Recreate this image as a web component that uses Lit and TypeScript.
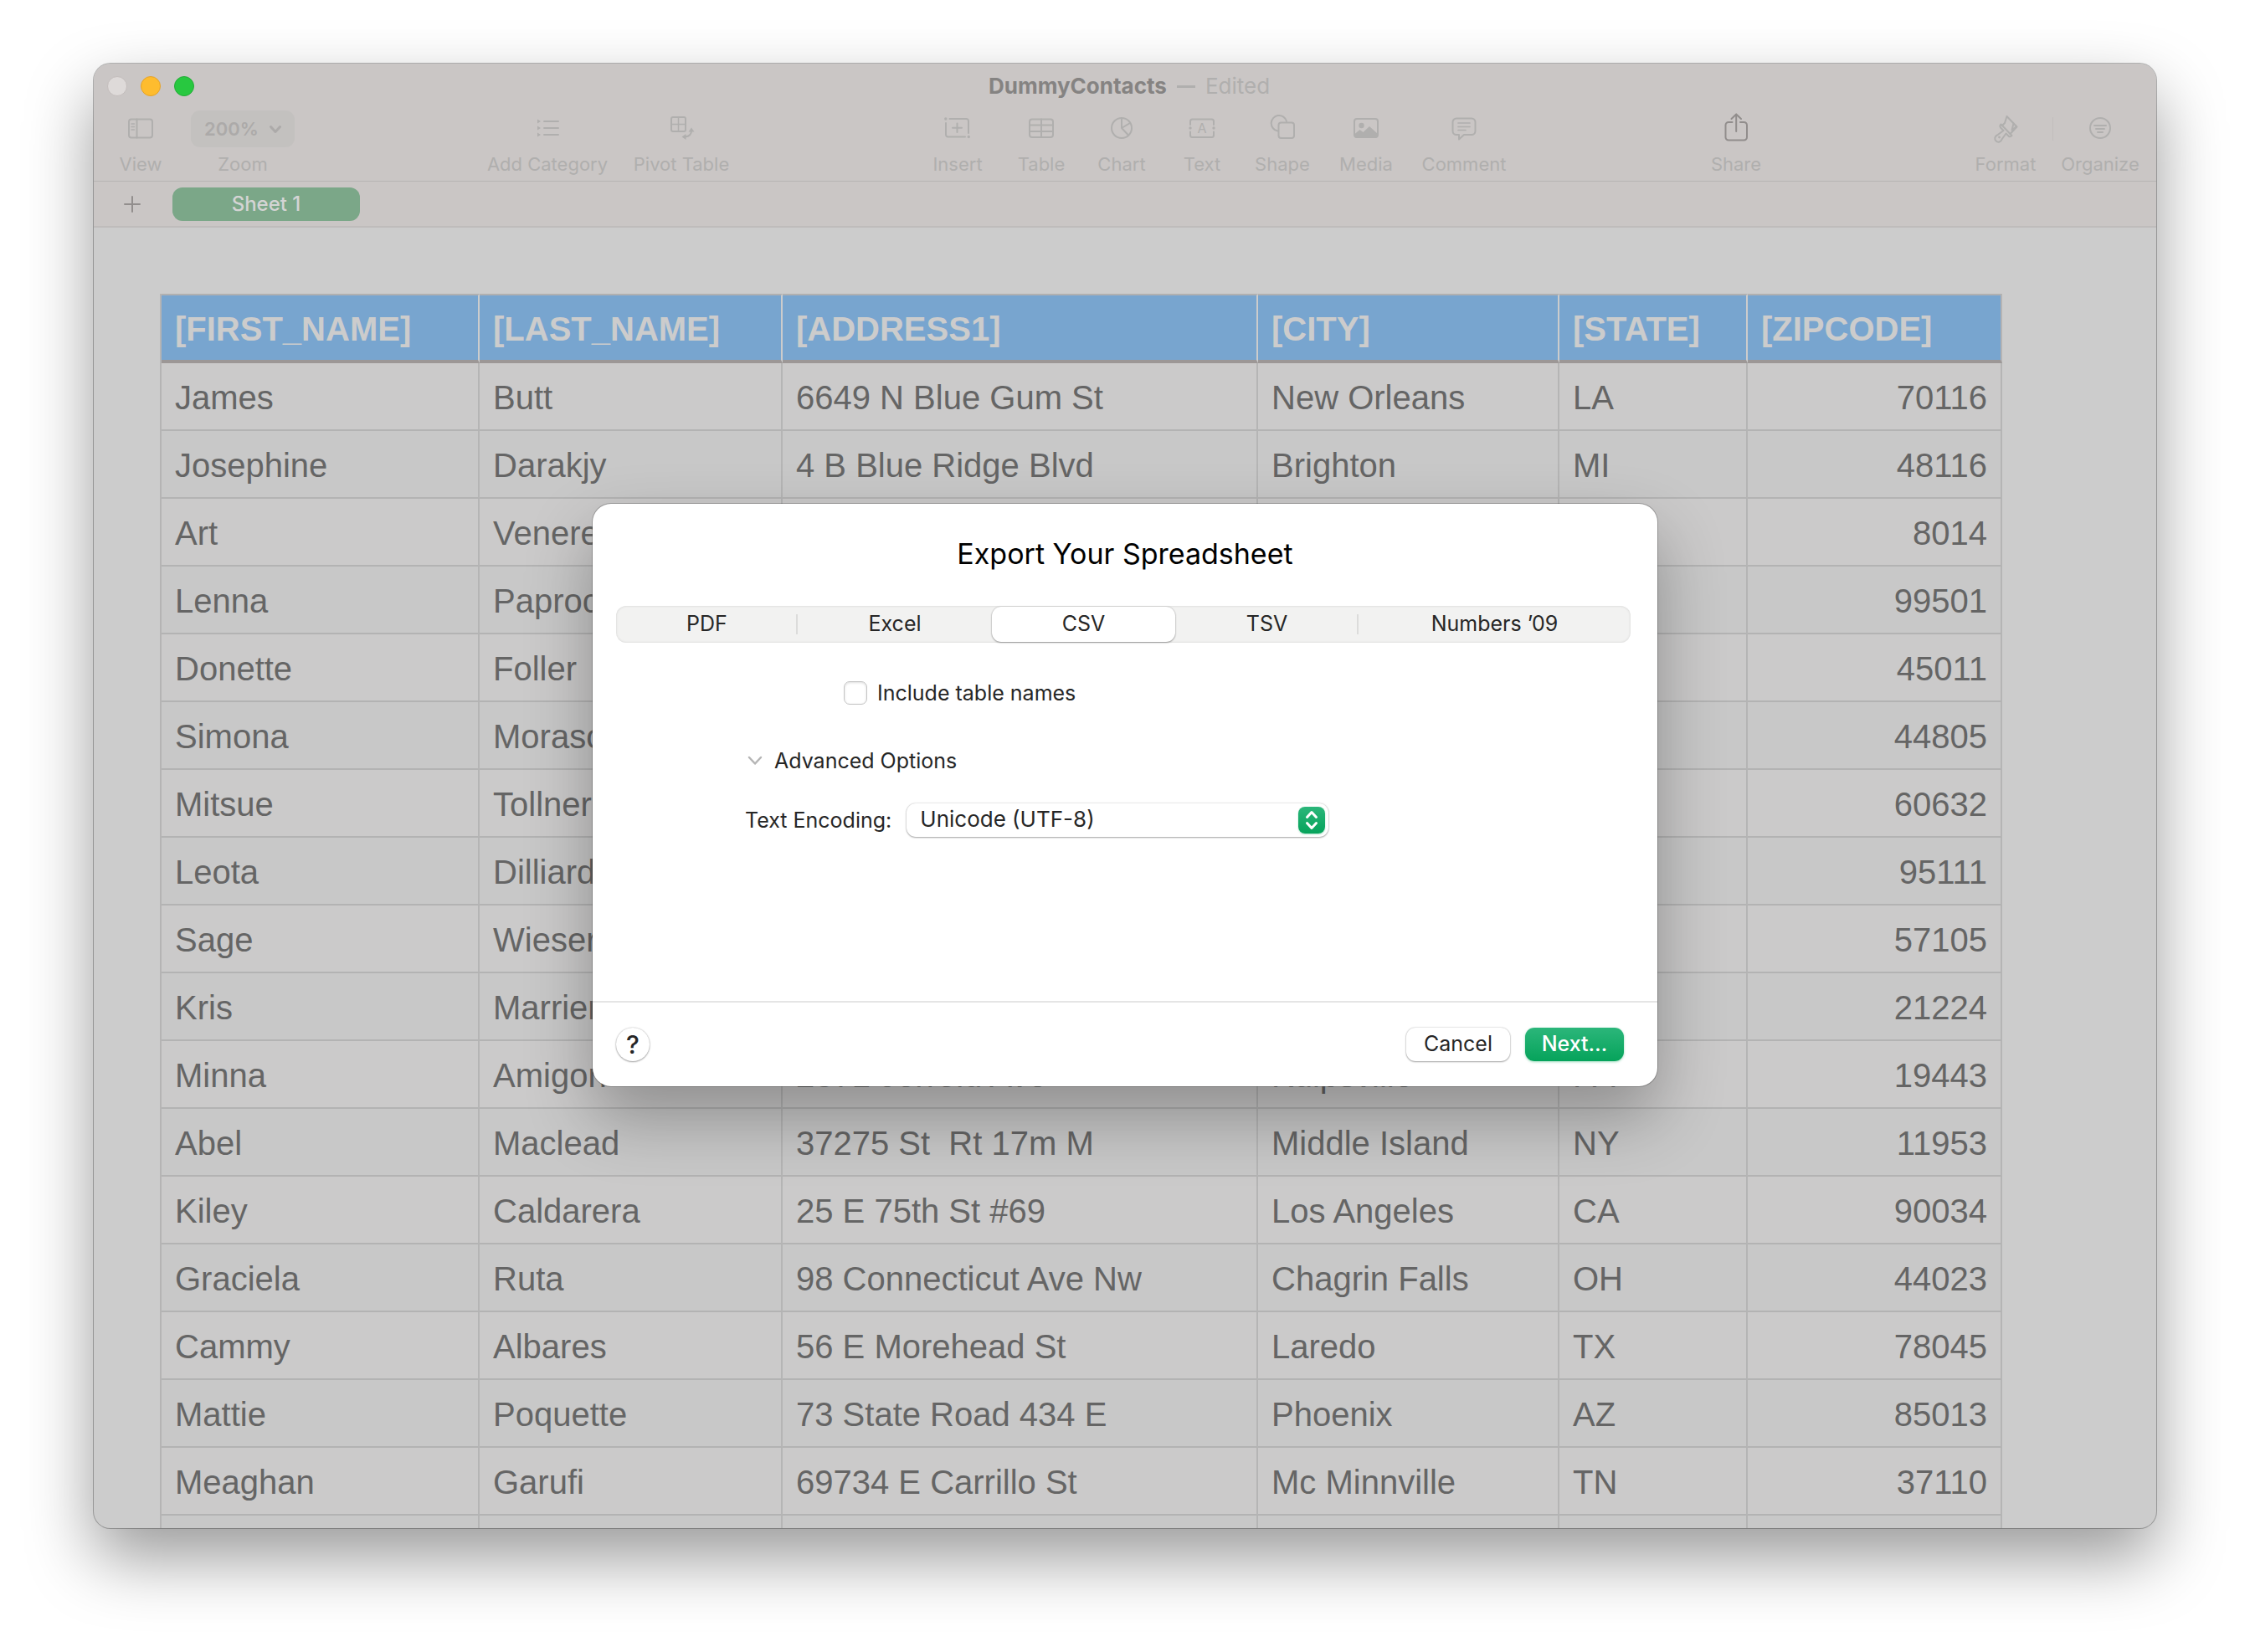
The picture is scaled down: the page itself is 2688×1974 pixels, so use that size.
import { LitElement, html, svg, css, TemplateResult, SVGTemplateResult } from "lit";
import { customElement, property, state } from "lit/decorators.js";
import { classMap } from "lit/directives/class-map.js";

const icons: Record<string, SVGTemplateResult> = {
  view: svg`
    <rect x="4" y="7.500" width="28" height="22" rx="3"/>
    <path d="M13.500 7.500V29.500"/>
    <path d="M7 13h3.500M7 16.500h3.500M7 20h3.500" stroke-width="1.500"/>`,
  category: svg`
    <path d="M14 10H31M14 18H31M14 26H31"/>
    <path d="M6 7.500L10 10L6 12.500ZM6 15.500L10 18L6 20.500ZM6 23.500L10 26L6 28.500Z" fill="currentColor" stroke="none"/>`,
  pivot: svg`
    <rect x="6" y="5" width="17" height="17" rx="2"/>
    <path d="M14.500 5V22M6 13.500H23" stroke-width="1.500"/>
    <path d="M30 21C30 25.500 28 28 22.500 28.500"/>
    <path d="M30 17.500L33.500 22.500H26.500ZM18.500 28.500L23.500 25V32Z" fill="currentColor" stroke="none"/>`,
  insert: svg`
    <path d="M8.500 7H28.500a2.500 2.500 0 0 1 2.500 2.500V24"/>
    <path d="M4 12V26a2.500 2.500 0 0 0 2.500 2.500H27"/>
    <path d="M17.500 12.500V23M12 17.700H23"/>
    <circle cx="3.800" cy="7" r="1.700" fill="currentColor" stroke="none"/>
    <circle cx="31.300" cy="28.500" r="1.700" fill="currentColor" stroke="none"/>`,
  table: svg`
    <rect x="4" y="7.500" width="28" height="21.500" rx="3"/>
    <path d="M18 7.500V29M4 14.500H32M4 22H32"/>`,
  chart: svg`
    <circle cx="18" cy="18" r="12"/>
    <path d="M18 6V18L28 12M18 18L26 26.500"/>`,
  text: svg`
    <path d="M4 14V10a2.500 2.500 0 0 1 2.500-2.500H29.500a2.500 2.500 0 0 1 2.500 2.500V14"/>
    <path d="M4 22.500V26.500a2.500 2.500 0 0 0 2.500 2.500H29.500a2.500 2.500 0 0 0 2.500-2.500V22.500"/>
    <circle cx="4" cy="18" r="1.700" fill="currentColor" stroke="none"/>
    <circle cx="32" cy="18" r="1.700" fill="currentColor" stroke="none"/>
    <text x="18" y="24" font-size="16" text-anchor="middle" fill="currentColor" stroke="none">A</text>`,
  shape: svg`
    <path d="M12.500 21.500A9.300 9.300 0 1 1 23 10"/>
    <rect x="13.500" y="11.500" width="18.500" height="18.500" rx="3"/>`,
  media: svg`
    <rect x="4" y="7" width="28" height="22" rx="3"/>
    <circle cx="12.500" cy="15" r="3.200" fill="currentColor" stroke="none"/>
    <path d="M4 25.500L10.500 20L14.500 23L22 16L32 25V27a2.500 2.500 0 0 1-2.500 2.500H6.500A2.500 2.500 0 0 1 4 27Z" fill="currentColor" stroke="none"/>`,
  comment: svg`
    <path d="M9 6.500H27a4.500 4.500 0 0 1 4.500 4.500V21.500a4.500 4.500 0 0 1-4.500 4.500H18L12 31.500V26H9a4.500 4.500 0 0 1-4.500-4.500V11A4.500 4.500 0 0 1 9 6.500Z"/>
    <path d="M11 12H25M11 16.500H25M11 20.500H20" stroke-width="1.700"/>`,
  share: svg`
    <path d="M13.500 11H9a3.500 3.500 0 0 0-3.500 3.500V29a3.500 3.500 0 0 0 3.500 3.500H27.500a3.500 3.500 0 0 0 3.500-3.500V14.500a3.500 3.500 0 0 0-3.500-3.500H23"/>
    <path d="M18.200 22V1.500M12.500 7L18.200 1.500L24 7"/>`,
  format: svg`
    <path d="M19.500 4L31.500 16.500L23.500 25L14 15L17 12Z"/>
    <path d="M14 15L12.500 13.500Q10.500 15.500 12 17.500L15.500 21L8 26.500A4.200 4.200 0 1 0 13.500 31.500L18.500 24.500L22 28Q24 29 25.500 27L23.500 25"/>
    <path d="M31 16L25.500 20.500L27.500 12.500"/>
    <circle cx="10.500" cy="29" r="1.400" fill="currentColor" stroke="none"/>`,
  organize: svg`
    <circle cx="18" cy="18" r="12"/>
    <path d="M11 15H25M13 19H23M15 23H21"/>`,
};

@customElement("tool-item")
class ToolItem extends LitElement {
  @property() label = "";
  @property() icon = "";
  @property({ type: Boolean }) strong = false;

  static styles = css`
    :host { display: block; }
    .tool {
      width: 100%; padding: 0; border: 0; background: none;
      display: flex; flex-direction: column; align-items: center; gap: 6px;
      font: 400 22px/28px Inter, "Liberation Sans", sans-serif;
      color: #b0afae; white-space: nowrap;
    }
    .box { height: 42px; display: flex; align-items: center; padding-bottom: 2px; }
    .icon {
      width: 36px; height: 36px; display: block; overflow: visible;
      fill: none; stroke: currentColor; stroke-width: 2;
      stroke-linecap: round; stroke-linejoin: round;
    }
    .dark { color: #918d8c; }
  `;

  render() {
    return html`<button class="tool">
      <span class=${classMap({ box: true, dark: this.strong })}>
        <svg class="icon" viewBox="0 0 36 36" aria-hidden="true">${icons[this.icon]}</svg>
      </span>
      <span>${this.label}</span>
    </button>`;
  }
}

const headers = ["[FIRST_NAME]", "[LAST_NAME]", "[ADDRESS1]", "[CITY]", "[STATE]", "[ZIPCODE]"];

const rows: string[][] = [
  ["James", "Butt", "6649 N Blue Gum St", "New Orleans", "LA", "70116"],
  ["Josephine", "Darakjy", "4 B Blue Ridge Blvd", "Brighton", "MI", "48116"],
  ["Art", "Venere", "", "", "", "8014"],
  ["Lenna", "Paprocki", "", "", "", "99501"],
  ["Donette", "Foller", "", "", "", "45011"],
  ["Simona", "Morasca", "", "", "", "44805"],
  ["Mitsue", "Tollner", "", "", "", "60632"],
  ["Leota", "Dilliard", "", "", "", "95111"],
  ["Sage", "Wieser", "", "", "", "57105"],
  ["Kris", "Marrier", "", "", "", "21224"],
  ["Minna", "Amigon", "2371 Jerrold Ave", "Kulpsville", "PA", "19443"],
  ["Abel", "Maclead", "37275 St  Rt 17m M", "Middle Island", "NY", "11953"],
  ["Kiley", "Caldarera", "25 E 75th St #69", "Los Angeles", "CA", "90034"],
  ["Graciela", "Ruta", "98 Connecticut Ave Nw", "Chagrin Falls", "OH", "44023"],
  ["Cammy", "Albares", "56 E Morehead St", "Laredo", "TX", "78045"],
  ["Mattie", "Poquette", "73 State Road 434 E", "Phoenix", "AZ", "85013"],
  ["Meaghan", "Garufi", "69734 E Carrillo St", "Mc Minnville", "TN", "37110"],
  ["", "", "", "", "", ""],
];

@customElement("contact-sheet")
class ContactSheet extends LitElement {
  static styles = css`
    :host { display: block; }
    .grid {
      table-layout: fixed; width: 2201px; border-collapse: separate; border-spacing: 0;
      border-left: 2px solid #b5b4b4;
      font: 400 40px/46px "Liberation Sans", Arial, sans-serif; color: #656565;
    }
    .first { width: 380px; }
    .last { width: 362px; }
    .address { width: 568px; }
    .city { width: 360px; }
    .state { width: 225px; }
    .zip { width: 304px; }
    th, td {
      box-sizing: border-box; padding: 3px 16px 0; text-align: left;
      white-space: pre; overflow: hidden;
    }
    th {
      height: 83px; background: #78a5cf; color: #cccccc; font-weight: 700;
      border-top: 2px solid #b0b0b0; border-bottom: 4px solid #9c9796;
      border-right: 2px solid #cccccc;
    }
    th:last-child { border-right-color: #b5b4b4; }
    td {
      height: 81px; background: #cbcaca;
      border-right: 2px solid #b5b5b5; border-bottom: 2px solid #b3b3b3;
    }
    tr:nth-child(even) td { background: #c8c8c8; }
    td:last-child { text-align: right; }
  `;

  render() {
    return html`<table class="grid">
      <colgroup>
        <col class="first" /><col class="last" /><col class="address" />
        <col class="city" /><col class="state" /><col class="zip" />
      </colgroup>
      <thead><tr>${headers.map((h) => html`<th scope="col">${h}</th>`)}</tr></thead>
      <tbody>${rows.map((r) => html`<tr>${r.map((c) => html`<td>${c}</td>`)}</tr>`)}</tbody>
    </table>`;
  }
}

@customElement("export-dialog")
class ExportDialog extends LitElement {
  @state() private format = "CSV";
  private formats = ["PDF", "Excel", "CSV", "TSV", "Numbers ’09"];

  static styles = css`
    :host {
      display: block; width: 1272px; max-width: 100%; box-sizing: border-box;
      border-radius: 22px; background: #ffffff; color: #262626;
      box-shadow: 0 0 0 1px rgba(0, 0, 0, 0.22), 0 36px 80px rgba(0, 0, 0, 0.3);
      font: 400 25px/28px Inter, "Liberation Sans", sans-serif;
    }
    button, select { font: inherit; color: inherit; }
    .title {
      margin: 0; padding: 40px 0 42px; text-align: center;
      font-size: 34px; line-height: 40px; font-weight: 400; color: #000000;
    }
    .segments {
      margin: 0 32px 0 28px; height: 44px; display: grid;
      grid-template-columns: 217fr 232fr 219fr 219fr 325fr;
      border-radius: 12px; background: #f2f2f1;
      box-shadow: inset 0 0 3px rgba(0, 0, 0, 0.15);
    }
    .segment {
      position: relative; border: 0; background: none; padding: 0 0 2px;
      border-radius: 11px;
    }
    .divided::after {
      content: ""; position: absolute; right: 0; top: 10px; bottom: 10px;
      width: 2px; background: #dcdcdb;
    }
    .chosen {
      margin: 1px 0; padding: 0 0 2px; background: #ffffff;
      box-shadow: 0 0 2px rgba(0, 0, 0, 0.25), 0 1px 2px rgba(0, 0, 0, 0.3);
    }
    .body { padding: 46px 0 196px; display: flex; flex-direction: column; }
    .include { display: flex; align-items: center; gap: 12px; padding-left: 300px; }
    .check {
      appearance: none; margin: 0; width: 28px; height: 28px; box-sizing: border-box;
      border: 1px solid #c4c4c4; border-radius: 7px; background: #ffffff;
      box-shadow: inset 0 1px 3px rgba(0, 0, 0, 0.14);
    }
    .advanced {
      display: flex; align-items: center; gap: 14px; align-self: flex-start;
      margin: 53px 0 37px 185px; padding: 0; border: 0; background: none;
    }
    .chevron { width: 18px; height: 12px; fill: none; stroke: #b5b5b5; stroke-width: 2.5; stroke-linecap: round; stroke-linejoin: round; }
    .encoding { display: flex; align-items: center; gap: 18px; padding-left: 182px; }
    .picker { position: relative; display: block; }
    .select {
      appearance: none; display: block; width: 504px; height: 40px; border: 0; margin: 0;
      padding: 0 40px 2px 16px; border-radius: 11px; background: #ffffff;
      font-size: 26px;
      box-shadow: 0 0 2px rgba(0, 0, 0, 0.25), 0 1px 2px rgba(0, 0, 0, 0.3);
    }
    .stepper {
      position: absolute; right: 4px; top: 4px; width: 32px; height: 32px;
      border-radius: 8px; background: linear-gradient(#2bb67a, #06a35b);
      box-shadow: 0 1px 2px rgba(6, 163, 91, 0.35); pointer-events: none;
      fill: none; stroke: #ffffff; stroke-width: 3; stroke-linecap: round; stroke-linejoin: round;
    }
    .footer {
      display: flex; align-items: center; gap: 18px;
      padding: 30px 40px 30px 28px; border-top: 2px solid #e5e5e5;
    }
    .push {
      height: 40px; border: 0; border-radius: 11px; padding: 0 20px 2px; background: #ffffff;
      box-shadow: 0 0 2px rgba(0, 0, 0, 0.28), 0 1px 2px rgba(0, 0, 0, 0.3);
    }
    .help { width: 40px; padding: 0; border-radius: 50%; margin-right: auto; font-size: 30px; font-weight: 500; }
    .cancel { width: 124px; padding: 0 0 2px; }
    .next {
      width: 118px; padding: 0 0 2px; color: #ffffff; font-weight: 500;
      background: linear-gradient(#2bb67a, #06a35b);
      box-shadow: 0 1px 3px rgba(6, 163, 91, 0.4);
    }
  `;

  render() {
    const chosen = this.formats.indexOf(this.format);
    return html`
      <h1 class="title">Export Your Spreadsheet</h1>
      <div class="segments" role="tablist">
        ${this.formats.map((f, i) => html`<button role="tab"
          aria-selected=${i === chosen ? "true" : "false"}
          class=${classMap({
            segment: true,
            chosen: i === chosen,
            divided: i !== chosen && i + 1 !== chosen && i < this.formats.length - 1,
          })}
          @click=${() => (this.format = f)}>${f}</button>`)}
      </div>
      <div class="body">
        <div class="include">
          <input class="check" type="checkbox" id="names" />
          <label for="names">Include table names</label>
        </div>
        <button class="advanced" aria-expanded="true">
          <svg class="chevron" viewBox="0 0 18 12" aria-hidden="true"><path d="M2 2L9 9.500L16 2"/></svg>
          Advanced Options
        </button>
        <div class="encoding">
          <label for="encoding">Text Encoding:</label>
          <span class="picker">
            <select class="select" id="encoding"><option>Unicode (UTF-8)</option></select>
            <svg class="stepper" viewBox="0 0 32 32" aria-hidden="true">
              <path d="M10.500 12.500L16 6.500L21.500 12.500M10.500 19.500L16 25.500L21.500 19.500"/>
            </svg>
          </span>
        </div>
      </div>
      <div class="footer">
        <button class="push help">?</button>
        <button class="push cancel">Cancel</button>
        <button class="push next">Next…</button>
      </div>`;
  }
}

@customElement("app-root")
class AppRoot extends LitElement {
  static styles = css`
    :host {
      display: flex; box-sizing: border-box; height: 100vh; padding: 76px 112px 148px;
      background: #ffffff; font: 400 26px/28px Inter, "Liberation Sans", sans-serif;
    }
    .window {
      position: relative; flex: 1; min-width: 0; display: flex; flex-direction: column;
      border-radius: 20px; background: #cccccc;
      box-shadow: 0 0 0 1px rgba(0, 0, 0, 0.28), 0 36px 80px rgba(0, 0, 0, 0.4);
    }
    .chrome { background: #cac6c5; border-radius: 20px 20px 0 0; border-bottom: 1px solid #b6b4b3; }
    .titlebar { height: 54px; padding: 0 6px 0 16px; display: grid; grid-template-columns: 1fr auto 1fr; align-items: center; }
    .lights { display: flex; gap: 16px; }
    .light { width: 24px; height: 24px; box-sizing: border-box; padding: 0; border-radius: 50%; border: 1px solid #c3bdbc; background: #dedad9; }
    .amber { background: #febc2e; border-color: #e5a32a; }
    .green { background: #28c840; border-color: #23ac37; }
    .name { display: flex; align-items: center; gap: 12px; color: #b0afae; }
    .file { margin: 0; font-size: 26px; font-weight: 700; color: #858382; }
    .dash { width: 22px; height: 3px; background: #b0afae; }
    .toolbar { display: flex; padding: 2px 17px 6px 4px; }
    .gap-wide { flex: 222 1 0; }
    .gap-mid { flex: 210 1 0; }
    .gap-slim { flex: 198 1 0; }
    .w96 { width: 96px; }
    .w100 { width: 100px; }
    .w104 { width: 104px; }
    .w130 { width: 130px; }
    .w160 { width: 160px; }
    .rule { width: 1px; height: 28px; margin: 8px 6px; background: #c1bdbc; }
    .zoom { margin: 0 0 0 8px; width: 124px; display: flex; flex-direction: column; align-items: center; gap: 6px; color: #b0afae; font-size: 22px; }
    .level { position: relative; display: block; }
    .level-select {
      appearance: none; display: block; width: 124px; height: 44px; border: 0; margin: 0; padding: 0 0 0 16px;
      border-radius: 11px; background: #c3c1bf; color: #acaaa9; font: 600 22px/28px Inter, "Liberation Sans", sans-serif;
    }
    .level-chevron { position: absolute; right: 15px; top: 17px; width: 16px; height: 12px; fill: none; stroke: #acaaa9; stroke-width: 3; stroke-linecap: round; stroke-linejoin: round; pointer-events: none; }
    .tabs { height: 53px; flex: none; display: flex; align-items: center; gap: 37px; padding-left: 35px; background: #cac6c5; border-bottom: 2px solid #bfbcbb; }
    .add { width: 22px; height: 22px; padding: 0; border: 0; background: none; color: #928e8d; }
    .plus { display: block; width: 22px; height: 22px; fill: none; stroke: currentColor; stroke-width: 2; stroke-linecap: round; }
    .tab { width: 224px; height: 40px; border: 0; border-radius: 12px; background: #7ba788; color: #d4d4d4; font: 500 24px/28px Inter, "Liberation Sans", sans-serif; }
    .canvas { flex: 1; min-height: 0; overflow: hidden; padding: 79px 0 0 79px; border-radius: 0 0 20px 20px; }
    .overlay { position: absolute; inset: 0; display: grid; place-items: center; padding-bottom: 2px; }
  `;

  private tool(label: string, icon: string, width: string, strong = false): TemplateResult {
    return html`<tool-item class=${width} .label=${label} .icon=${icon} .strong=${strong}></tool-item>`;
  }

  render() {
    return html`<main class="window">
      <header class="chrome">
        <div class="titlebar">
          <div class="lights">
            <button class="light" aria-label="Close"></button>
            <button class="light amber" aria-label="Minimize"></button>
            <button class="light green" aria-label="Full screen"></button>
          </div>
          <div class="name">
            <h2 class="file">DummyContacts</h2><span class="dash"></span><span>Edited</span>
          </div>
        </div>
        <div class="toolbar">
          ${this.tool("View", "view", "w104")}
          <div class="zoom">
            <span class="level">
              <select class="level-select" id="zoom"><option>200%</option></select>
              <svg class="level-chevron" viewBox="0 0 16 12" aria-hidden="true"><path d="M2.500 2.500L8 8.500L13.500 2.500"/></svg>
            </span>
            <label for="zoom">Zoom</label>
          </div>
          <span class="gap-wide"></span>
          ${this.tool("Add Category", "category", "w160")}
          ${this.tool("Pivot Table", "pivot", "w160")}
          <span class="gap-slim"></span>
          ${this.tool("Insert", "insert", "w104")}
          ${this.tool("Table", "table", "w96")}
          ${this.tool("Chart", "chart", "w96")}
          ${this.tool("Text", "text", "w96")}
          ${this.tool("Shape", "shape", "w96")}
          ${this.tool("Media", "media", "w104")}
          ${this.tool("Comment", "comment", "w130")}
          <span class="gap-mid"></span>
          ${this.tool("Share", "share", "w100", true)}
          <span class="gap-wide"></span>
          ${this.tool("Format", "format", "w100")}
          <span class="rule"></span>
          ${this.tool("Organize", "organize", "w100")}
        </div>
      </header>
      <nav class="tabs">
        <button class="add" aria-label="Add sheet">
          <svg class="plus" viewBox="0 0 22 22" aria-hidden="true"><path d="M11 2V20M2 11H20"/></svg>
        </button>
        <button class="tab">Sheet 1</button>
      </nav>
      <section class="canvas"><contact-sheet></contact-sheet></section>
      <div class="overlay"><export-dialog role="dialog" aria-modal="true" aria-label="Export Your Spreadsheet"></export-dialog></div>
    </main>`;
  }
}
